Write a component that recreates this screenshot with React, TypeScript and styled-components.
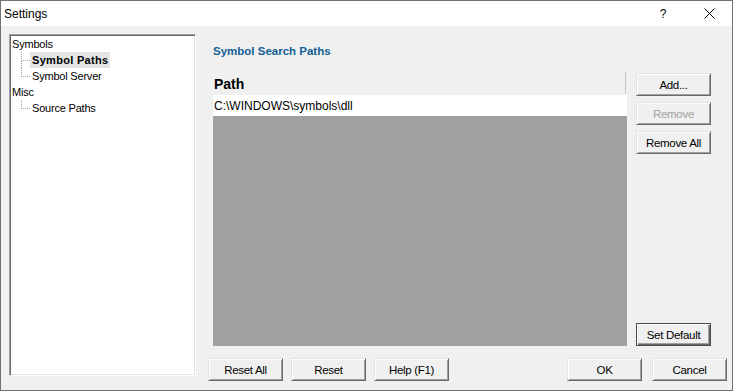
import React from 'react';
import styled, { createGlobalStyle } from 'styled-components';

const GlobalStyle = createGlobalStyle`
  html, body {
    margin: 0;
    padding: 0;
    background: #ffffff;
  }
  body {
    font-family: "Liberation Sans", Arial, sans-serif;
    color: #000000;
  }
`;

const Window = styled.div`
  box-sizing: border-box;
  width: 733px;
  height: 391px;
  border: 1px solid #717171;
  background: #f0f0f0;
  display: flex;
  flex-direction: column;
  overflow: hidden;
`;

const TitleBar = styled.div`
  height: 25px;
  flex: none;
  background: #ffffff;
  display: flex;
  align-items: center;
  padding: 0 0 0 3px;
  font-size: 12px;
`;

const Title = styled.span`
  flex: 1;
  padding-top: 1px;
`;

const TitleButton = styled.span`
  width: 46px;
  height: 25px;
  display: flex;
  align-items: center;
  justify-content: center;
  font-size: 12px;
`;

const Body = styled.div`
  flex: 1;
  display: flex;
  gap: 12px;
  padding: 8px 5px 0 8px;
`;

const TreePanel = styled.div`
  box-sizing: border-box;
  width: 187px;
  height: 342px;
  flex: none;
  background: #ffffff;
  border-style: solid;
  border-width: 1px;
  border-color: #a0a0a0 #ffffff #ffffff #a0a0a0;
  box-shadow: inset 1px 1px 0 #696969, inset -1px -1px 0 #e3e3e3;
  padding: 1px 0 0 0;
  font-size: 11px;
`;

const TreeRow = styled.div<{ $level: number; $last?: boolean }>`
  position: relative;
  height: 16px;
  display: flex;
  align-items: center;
  padding-left: ${(p) => (p.$level ? 20 : 0)}px;

  ${(p) =>
    p.$level
      ? `
  &::before {
    content: '';
    position: absolute;
    left: 11px;
    top: 0;
    width: 8px;
    height: 8px;
    border-left: 1px dotted #a0a0a0;
    border-bottom: 1px dotted #a0a0a0;
  }
  `
      : ''}

  ${(p) =>
    p.$level && !p.$last
      ? `
  &::after {
    content: '';
    position: absolute;
    left: 11px;
    top: 8px;
    height: 8px;
    border-left: 1px dotted #a0a0a0;
  }
  `
      : ''}
`;

const TreeLabel = styled.span<{ $selected?: boolean }>`
  padding: 1px 2px;
  line-height: 14px;
  letter-spacing: ${(p) => (p.$selected ? '0.3px' : '-0.2px')};
  background: ${(p) => (p.$selected ? '#e5e5e5' : 'transparent')};
  font-weight: ${(p) => (p.$selected ? 'bold' : 'normal')};
`;

const Content = styled.div`
  flex: 1;
  display: flex;
  flex-direction: column;
`;

const Heading = styled.div`
  margin: 10px 0 0 5px;
  height: 14px;
  line-height: 14px;
  font-size: 11.5px;
  font-weight: bold;
  color: #135f94;
`;

const MainRow = styled.div`
  margin-top: 14px;
  height: 274px;
  display: flex;
  gap: 9px;
  padding-left: 5px;
`;

const PathList = styled.div`
  width: 414px;
  display: flex;
  flex-direction: column;
`;

const ListHeader = styled.div`
  height: 23px;
  display: flex;
  align-items: center;
  padding-left: 1px;
  font-size: 14px;
  font-weight: bold;
  position: relative;

  &::after {
    content: '';
    position: absolute;
    right: 1px;
    top: 0;
    height: 22px;
    border-left: 1px solid #c6c6c6;
  }
`;

const ListItem = styled.div`
  height: 21px;
  background: #ffffff;
  display: flex;
  align-items: center;
  padding-left: 1px;
  font-size: 12px;
`;

const ListEmpty = styled.div`
  flex: 1;
  background: #a0a0a0;
`;

const SideButtons = styled.div`
  width: 75px;
  display: flex;
  flex-direction: column;
  justify-content: space-between;
  padding-top: 1px;
`;

const ButtonStack = styled.div`
  display: flex;
  flex-direction: column;
  gap: 6px;
`;

const Button = styled.button<{ $default?: boolean }>`
  box-sizing: border-box;
  width: 75px;
  height: 23px;
  margin: 0;
  padding: 0;
  font-family: "Liberation Sans", Arial, sans-serif;
  font-size: 11.5px;
  letter-spacing: -0.3px;
  color: #000000;
  background: #f0f0f0;
  border-style: solid;
  border-width: 1px;
  border-color: ${(p) =>
    p.$default ? '#4a4a4a' : '#e3e3e3 #696969 #696969 #e3e3e3'};
  box-shadow: ${(p) =>
    p.$default
      ? 'inset 1px 1px 0 #ffffff, inset -1px -1px 0 #696969, inset -2px -2px 0 #a0a0a0'
      : 'inset 1px 1px 0 #ffffff, inset -1px -1px 0 #a0a0a0'};
  outline: none;

  &:disabled {
    color: #a0a0a0;
  }
`;

const BottomRow = styled.div`
  margin-top: 12px;
  display: flex;
  justify-content: space-between;
`;

const ButtonGroup = styled.div<{ $gap: number }>`
  display: flex;
  gap: ${(p) => p.$gap}px;
`;

const CloseIcon = () => (
  <svg width="11" height="11" viewBox="0 0 11 11">
    <path d="M0.5 0.5 L10.5 10.5 M10.5 0.5 L0.5 10.5" stroke="#000" strokeWidth="1" fill="none" />
  </svg>
);

const tree = [
  { label: 'Symbols', level: 0 },
  { label: 'Symbol Paths', level: 1, selected: true },
  { label: 'Symbol Server', level: 1, last: true },
  { label: 'Misc', level: 0 },
  { label: 'Source Paths', level: 1, last: true },
];

const App = () => {
  return (
    <>
      <GlobalStyle />
      <Window>
        <TitleBar>
          <Title>Settings</Title>
          <TitleButton>?</TitleButton>
          <TitleButton>
            <CloseIcon />
          </TitleButton>
        </TitleBar>
        <Body>
          <TreePanel>
            {tree.map((item) => (
              <TreeRow key={item.label} $level={item.level} $last={item.last}>
                <TreeLabel $selected={item.selected}>{item.label}</TreeLabel>
              </TreeRow>
            ))}
          </TreePanel>
          <Content>
            <Heading>Symbol Search Paths</Heading>
            <MainRow>
              <PathList>
                <ListHeader>Path</ListHeader>
                <ListItem>C:\WINDOWS\symbols\dll</ListItem>
                <ListEmpty />
              </PathList>
              <SideButtons>
                <ButtonStack>
                  <Button>Add...</Button>
                  <Button disabled>Remove</Button>
                  <Button>Remove All</Button>
                </ButtonStack>
                <Button $default>Set Default</Button>
              </SideButtons>
            </MainRow>
            <BottomRow>
              <ButtonGroup $gap={8}>
                <Button>Reset All</Button>
                <Button>Reset</Button>
                <Button>Help (F1)</Button>
              </ButtonGroup>
              <ButtonGroup $gap={10}>
                <Button>OK</Button>
                <Button>Cancel</Button>
              </ButtonGroup>
            </BottomRow>
          </Content>
        </Body>
      </Window>
    </>
  );
};

export default App;
